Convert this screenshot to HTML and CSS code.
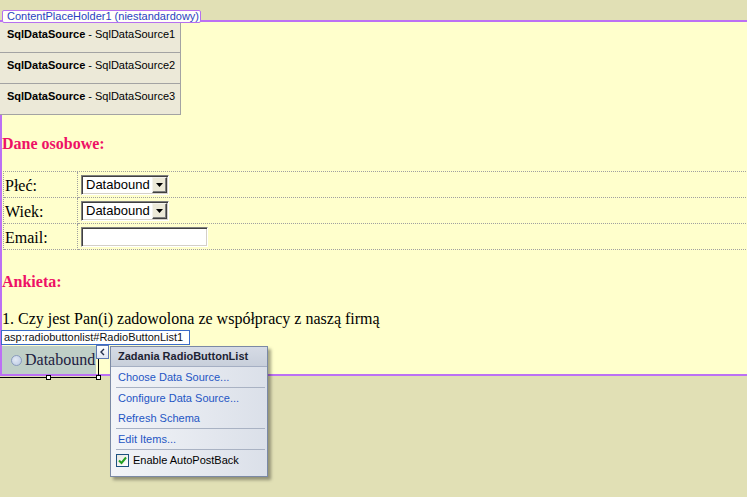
FILE: index.html
```html
<!DOCTYPE html>
<html lang="pl">
<head>
<meta charset="utf-8">
<title>Design view</title>
<link rel="stylesheet" href="styles.css">
</head>
<body>
<div class="placeholder">
  <span class="ph-label">ContentPlaceHolder1 (niestandardowy)</span>
  <div class="ds"><b>SqlDataSource</b> - SqlDataSource1</div>
  <div class="ds"><b>SqlDataSource</b> - SqlDataSource2</div>
  <div class="ds"><b>SqlDataSource</b> - SqlDataSource3</div>

  <div class="title first">Dane osobowe:</div>

  <div class="form">
    <div class="lbl">Płeć:</div>
    <div class="fld">
      <span class="select"><span class="val">Databound</span><span class="btn"><svg width="13" height="14" viewBox="0 0 13 14"><polygon points="3,5 10,5 6.5,9" fill="#000"/></svg></span></span>
    </div>
    <div class="lbl">Wiek:</div>
    <div class="fld">
      <span class="select"><span class="val">Databound</span><span class="btn"><svg width="13" height="14" viewBox="0 0 13 14"><polygon points="3,5 10,5 6.5,9" fill="#000"/></svg></span></span>
    </div>
    <div class="lbl">Email:</div>
    <div class="fld"><input class="email" type="text" value=""></div>
  </div>

  <div class="title second">Ankieta:</div>
  <div class="question">1. Czy jest Pan(i) zadowolona ze współpracy z naszą firmą</div>

  <div class="rbl">
    <span class="tag">asp:radiobuttonlist#RadioButtonList1</span>
    <span class="radio"></span><span class="rtext">Databound</span>
    <span class="frame"></span>
    <span class="handle h1"></span>
    <span class="handle h2"></span>
    <span class="smart"><svg width="11" height="12" viewBox="0 0 11 12"><polyline points="7,3 4,6 7,9" fill="none" stroke="#26324d" stroke-width="1.4"/></svg></span>
    <div class="tasks">
      <div class="tasks-head">Zadania RadioButtonList</div>
      <div class="item">Choose Data Source...</div>
      <div class="sep"></div>
      <div class="item">Configure Data Source...</div>
      <div class="item">Refresh Schema</div>
      <div class="sep"></div>
      <div class="item">Edit Items...</div>
      <div class="sep"></div>
      <div class="item check-item">
        <span class="check"><svg width="11" height="11" viewBox="0 0 11 11"><polyline points="2,5.5 4.5,8 9,2.5" fill="none" stroke="#22a022" stroke-width="2"/></svg></span>
        <span class="check-text">Enable AutoPostBack</span>
      </div>
    </div>
  </div>
</div>
</body>
</html>
```

FILE: styles.css
```css
* { box-sizing: border-box; }
html, body { margin: 0; padding: 0; }
body {
  background: #e1e0b5;
  font-family: "Liberation Serif", "Times New Roman", serif;
  font-size: 16px;
  line-height: 18px;
  color: #000;
  width: 747px;
  height: 497px;
  overflow: hidden;
}
.placeholder {
  position: relative;
  margin-top: 20px;
  width: 760px;
  background: #ffffcc;
  border: 2px solid #bc70f4;
  border-right: none;
}
.ph-label {
  position: absolute;
  left: 0;
  top: -12px;
  width: 199px;
  height: 13px;
  padding-left: 4px;
  background: #fffffa;
  border: 1px solid #b56ff0;
  border-radius: 2px;
  font: 11px/11px "Liberation Sans", Arial, sans-serif;
  color: #2a3fc2;
  white-space: nowrap;
}
.ds {
  margin-left: -2px;
  width: 181px;
  height: 31px;
  padding: 6px 0 0 7px;
  background: #ece9d8;
  border-right: 1px solid #a3a3a3;
  border-bottom: 1px solid #a3a3a3;
  font: 11px/12px "Liberation Sans", Arial, sans-serif;
  white-space: nowrap;
}
.title {
  color: #ee1166;
  font-weight: bold;
}
.title.first { margin-top: 20px; }
.title.second { margin-top: 23px; }
.form {
  display: grid;
  grid-template-columns: 74px 1fr;
  margin: 18px 0 0 1px;
  border-top: 1px dotted #a0a0a0;
  border-left: 1px dotted #a0a0a0;
}
.lbl {
  height: 26px;
  padding: 5px 0 0 1px;
  border-right: 1px dotted #a0a0a0;
  border-bottom: 1px dotted #a0a0a0;
}
.fld {
  height: 26px;
  padding: 3px 0 0 3px;
  border-bottom: 1px dotted #a0a0a0;
}
.select {
  display: flex;
  width: 88px;
  height: 20px;
  background: #fff;
  border: 1px solid;
  border-color: #7f7f7f #ffffff #ffffff #7f7f7f;
  box-shadow: inset 1px 1px 0 #404040, inset -1px -1px 0 #d4d0c8;
  padding: 1px;
}
.val {
  flex: 1;
  padding-left: 3px;
  font: 13px/16px "Liberation Sans", Arial, sans-serif;
  color: #000;
}
.btn {
  display: flex;
  width: 15px;
  height: 16px;
  background: #ece9d8;
  border: 1px solid;
  border-color: #f4f3ee #404040 #404040 #f4f3ee;
  box-shadow: inset -1px -1px 0 #808080;
}
.email {
  display: block;
  width: 127px;
  height: 20px;
  margin: 0;
  padding: 0;
  background: #fff;
  border: 1px solid;
  border-color: #7f7f7f #ffffff #ffffff #7f7f7f;
  box-shadow: inset 1px 1px 0 #404040, inset -1px -1px 0 #d4d0c8;
  outline: none;
}
.question { margin-top: 19px; }
.rbl {
  position: relative;
  display: flex;
  align-items: flex-start;
  margin-top: 18px;
  width: 94px;
  height: 28px;
  padding: 5px 0 0 9px;
  background: #bfcfc7;
}
.radio {
  width: 11px;
  height: 11px;
  margin: 4px 3px 0 0;
  border-radius: 50%;
  border: 1px solid #8a9cbe;
  background: radial-gradient(circle at 40% 40%, #e2e9f5, #b9c8e2);
}
.rtext { color: #1d2040; white-space: nowrap; }
.tag {
  position: absolute;
  left: -1px;
  top: -16px;
  width: 189px;
  height: 15px;
  padding-left: 2px;
  background: #fff;
  border: 1px solid #3a6bc8;
  font: 11px/13px "Liberation Sans", Arial, sans-serif;
  color: #111;
  white-space: nowrap;
}
.frame {
  position: absolute;
  left: -2px;
  top: -1px;
  width: 99px;
  height: 33px;
  border-right: 1px solid #000;
  border-bottom: 1px solid #000;
}
.handle {
  position: absolute;
  top: 29px;
  width: 5px;
  height: 5px;
  background: #fff;
  border: 1px solid #000;
}
.h1 { left: 44px; }
.h2 { left: 94px; }
.smart {
  position: absolute;
  left: 94px;
  top: -1px;
  width: 13px;
  height: 14px;
  display: flex;
  align-items: center;
  justify-content: center;
  background: linear-gradient(#ffffff, #e2e8f3);
  border: 1px solid #5d79b3;
}
.tasks {
  position: absolute;
  left: 108px;
  top: 0;
  width: 158px;
  height: 131px;
  z-index: 2;
  border: 1px solid #7b89a5;
  background: linear-gradient(to right, #f2f4f8, #dbe0e9);
  box-shadow: 3px 3px 3px rgba(0, 0, 0, 0.35);
  font: 11px/20px "Liberation Sans", Arial, sans-serif;
}
.tasks-head {
  height: 20px;
  padding-left: 7px;
  line-height: 19px;
  font-weight: bold;
  color: #1d2333;
  background: linear-gradient(#d6dbe5, #c8cfdb);
  border-bottom: 1px solid #a5afc3;
  white-space: nowrap;
}
.item {
  height: 20px;
  padding-left: 7px;
  color: #1f56c4;
  white-space: nowrap;
}
.sep {
  height: 1px;
  margin: 0 2px 0 5px;
  background: #a9b2c3;
}
.check-item {
  display: flex;
  align-items: center;
  padding-left: 5px;
  color: #000;
}
.check {
  display: flex;
  align-items: center;
  justify-content: center;
  width: 13px;
  height: 13px;
  margin-right: 4px;
  border: 1px solid #1c5180;
  background: linear-gradient(135deg, #e6e6e0, #ffffff);
}
```
